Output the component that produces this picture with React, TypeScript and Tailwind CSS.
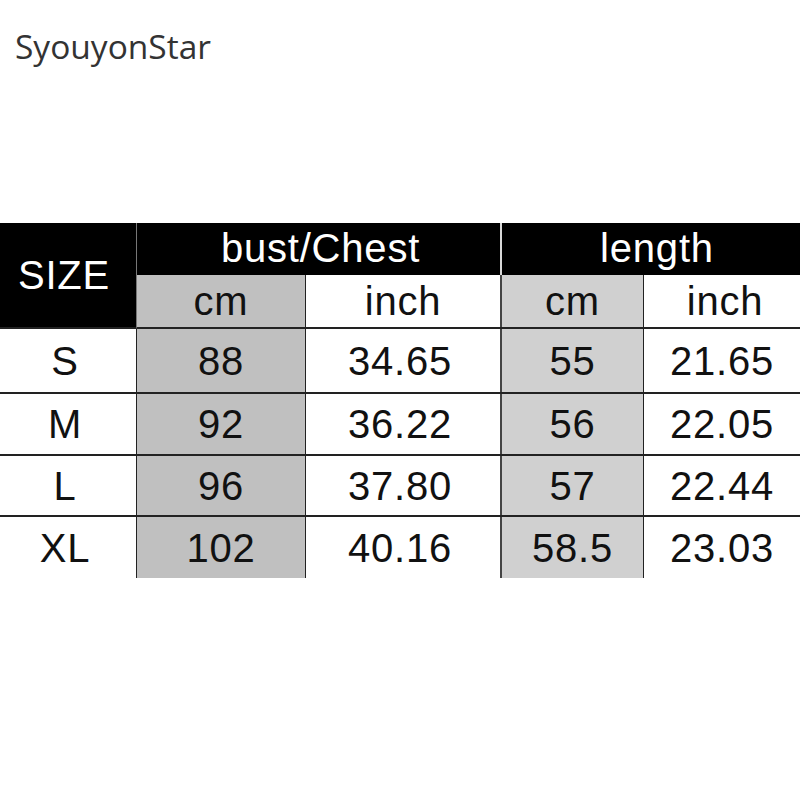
const rows = [
  { size: "S", bustCm: "88", bustIn: "34.65", lenCm: "55", lenIn: "21.65", h: "h-[65px]" },
  { size: "M", bustCm: "92", bustIn: "36.22", lenCm: "56", lenIn: "22.05", h: "h-[62px]" },
  { size: "L", bustCm: "96", bustIn: "37.80", lenCm: "57", lenIn: "22.44", h: "h-[61px]" },
  { size: "XL", bustCm: "102", bustIn: "40.16", lenCm: "58.5", lenIn: "23.03", h: "h-[61px]" },
];

const cell = "flex items-center justify-center";

export default function App() {
  return (
    <div className="h-[800px] w-[800px] bg-white font-['Liberation_Sans',Arial,sans-serif] text-[#111]">
      <div className="pl-[15px] pt-[26px] font-['Open_Sans',sans-serif] text-[33.5px] leading-[40px] text-[#333]">
        SyouyonStar
      </div>

      <div className="mt-[157px] text-[40px] leading-none tracking-[0.02em]">
        {/* header */}
        <div className="flex">
          <div className={`${cell} h-[106px] w-[137px] border-r border-b-2 border-r-[#777] border-b-[#222] bg-black pr-[8px] text-white`}>
            SIZE
          </div>
          <div className="flex flex-1 flex-col">
            <div className="flex h-[52px] bg-black text-white">
              <div className={`${cell} w-[365px] border-r-2 border-r-[#d8d8d8] pb-[2px] pl-[4px]`}>bust/Chest</div>
              <div className={`${cell} flex-1 pb-[2px] pl-[12px]`}>length</div>
            </div>
            <div className="flex h-[54px] border-b-2 border-b-[#222]">
              <div className={`${cell} w-[169px] border-r border-r-[#222] bg-[#c0c0c0]`}>cm</div>
              <div className={`${cell} w-[196px] border-r-2 border-r-[#444]`}>inch</div>
              <div className={`${cell} w-[142px] border-r border-r-[#222] bg-[#d0d0d0]`}>cm</div>
              <div className={`${cell} flex-1 pl-[6px]`}>inch</div>
            </div>
          </div>
        </div>

        {/* body */}
        {rows.map((r, i) => (
          <div
            key={r.size}
            className={`flex ${r.h} ${i < rows.length - 1 ? "border-b-2 border-b-[#222]" : ""}`}
          >
            <div className={`${cell} w-[137px] border-r border-r-[#222] pr-[6px]`}>{r.size}</div>
            <div className={`${cell} w-[169px] border-r border-r-[#222] bg-[#c0c0c0]`}>{r.bustCm}</div>
            <div className={`${cell} w-[196px] border-r-2 border-r-[#444] pr-[6px]`}>{r.bustIn}</div>
            <div className={`${cell} w-[142px] border-r border-r-[#222] bg-[#d0d0d0]`}>{r.lenCm}</div>
            <div className={`${cell} flex-1`}>{r.lenIn}</div>
          </div>
        ))}
      </div>
    </div>
  );
}
